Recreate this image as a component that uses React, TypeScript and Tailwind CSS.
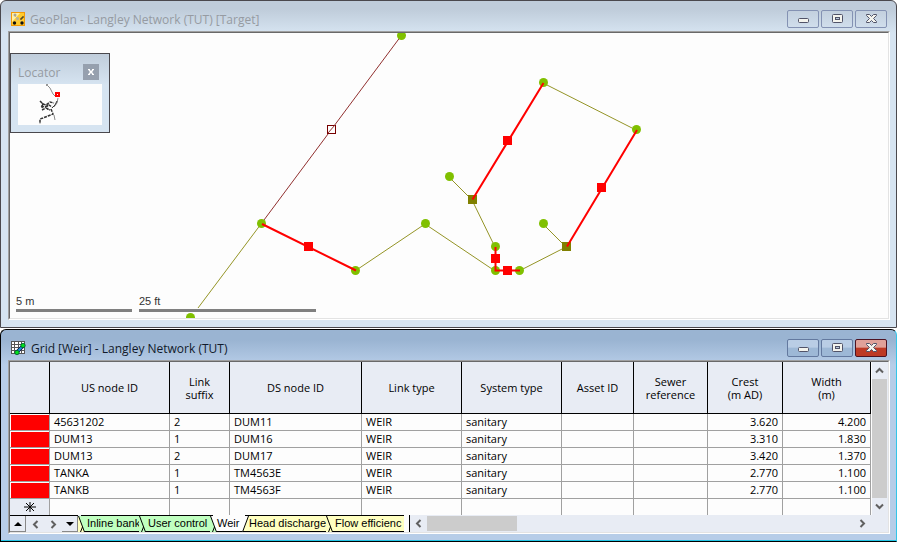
import type { ReactNode } from "react";

const columns = [
  { name: "US node ID", width: "w-[120px]" },
  { name: "Link\nsuffix", width: "w-[60px]" },
  { name: "DS node ID", width: "w-[132px]" },
  { name: "Link type", width: "w-[100px]" },
  { name: "System type", width: "w-[100px]" },
  { name: "Asset ID", width: "w-[72px]" },
  { name: "Sewer\nreference", width: "w-[74px]" },
  { name: "Crest\n(m AD)", width: "w-[75px]" },
  { name: "Width\n(m)", width: "w-[88px]" },
];

const rows = [
  ["45631202", "2", "DUM11", "WEIR", "sanitary", "", "", "3.620", "4.200"],
  ["DUM13", "1", "DUM16", "WEIR", "sanitary", "", "", "3.310", "1.830"],
  ["DUM13", "2", "DUM17", "WEIR", "sanitary", "", "", "3.420", "1.370"],
  ["TANKA", "1", "TM4563E", "WEIR", "sanitary", "", "", "2.770", "1.100"],
  ["TANKB", "1", "TM4563F", "WEIR", "sanitary", "", "", "2.770", "1.100"],
];

const nodes = [
  [391, 3], [251, 191], [345, 238], [415, 191], [439, 144], [485, 214],
  [485, 238], [509, 238], [533, 191], [533, 50], [626, 97], [180, 285],
];
const tanks = [[462, 167], [556, 214]];
const weirs = [[298, 214], [497, 108], [591, 155], [485, 226], [497, 238]];

const GeoPlanIcon = () => (
  <svg width="14" height="14" viewBox="0 0 14 14" aria-hidden="true">
    <rect width="14" height="14" fill="#f39a08" />
    <rect x="1" y="1" width="12" height="12" fill="#ffcb2e" />
    <path d="M1 1h8L1 10z" fill="#fff0a8" />
    <path d="M3 3l4 4M7 7l-3 4M7 7l4 3" stroke="#e2c56a" />
    <circle cx="4" cy="3" r="1.5" fill="#a8a59a" />
    <circle cx="6.500" cy="6.500" r="1.5" fill="#b9b297" />
    <circle cx="3.5" cy="11" r="1.700" fill="#111" />
    <circle cx="11" cy="11" r="1.700" fill="#111" />
    <path d="M9 7h2V5h2" stroke="#222" fill="none" />
  </svg>
);

const GridIcon = () => (
  <svg width="15" height="15" viewBox="0 0 15 15" aria-hidden="true">
    <path d="M0 0h14v13H0z" fill="#555" />
    <path
      d="M1 1h2v2H1zM4 1h3v2H4zM8 1h2v2H8zM11 1h2v2h-2zM1 4h2v2H1zM4 4h3v2H4zM8 4h2v2H8zM1 7h2v2H1zM4 7h3v2H4zM8 7h2v2H8zM11 7h2v2h-2zM1 10h2v2H1zM4 10h3v2H4zM8 10h2v2H8zM11 10h2v2h-2z"
      fill="#fff"
    />
    <path d="M6 11l6-6" stroke="#114" strokeWidth="3.500" />
    <path d="M6 11l6-6" stroke="#1899dd" strokeWidth="2" />
    <circle cx="12" cy="4.500" r="2.200" fill="#00e01c" stroke="#053" strokeWidth=".8" />
    <circle cx="6" cy="11.500" r="2.200" fill="#00e01c" stroke="#053" strokeWidth=".8" />
  </svg>
);

const glyphs = {
  Minimize: (
    <rect x="1.5" y="7.5" width="10" height="4" rx="1" fill="#f4f4ee" stroke="#515368" />
  ),
  Restore: (
    <g stroke="#515368">
      <rect x="1.5" y="3.5" width="10" height="8" rx="1" fill="#f4f4ee" />
      <rect x="4.5" y="6.5" width="4" height="2" fill="#b9c8da" />
    </g>
  ),
  Close: (
    <path
      d="M1.500 3.500h3l2 2 2-2h3v1L8.500 7.500l3 3v1h-3l-2-2-2 2h-3v-1l3-3-3-3z"
      fill="#f4f4ee"
      stroke="#515368"
    />
  ),
};

const WindowButtons = ({ active }: { active: boolean }) => (
  <div className="flex gap-[2px]">
    {(Object.keys(glyphs) as (keyof typeof glyphs)[]).map((label) => {
      let look = "border-[#8492b3] bg-linear-to-b from-[#c3d0de] to-[#d0deec]";
      if (active) {
        look =
          label === "Close"
            ? "border-[#4d1322] bg-linear-to-b from-[#e0a199] from-45% to-[#bd3a25] to-50%"
            : "border-[#63799f] bg-linear-to-b from-[#b9cde5] from-45% to-[#9db8d6] to-50%";
      }
      return (
        <button
          key={label}
          aria-label={label}
          className={`flex h-[18px] w-8 items-center justify-center rounded-[2px] border ${look}`}
        >
          <svg width="13" height="16" viewBox="0 0 13 16" aria-hidden="true">
            {glyphs[label]}
          </svg>
        </button>
      );
    })}
  </div>
);

type WindowProps = {
  title: string;
  icon: ReactNode;
  active?: boolean;
  children: ReactNode;
};

const Window = ({ title, icon, active = false, children }: WindowProps) => (
  <section
    aria-label={title}
    className={`rounded-t-md border pr-[6px] pb-[7px] pl-[7px] ${
      active
        ? "border-black border-r-[#35c5e8] bg-linear-to-b from-[#9ab4d2] from-[10px] to-[#b7cde8] to-[35px] shadow-[inset_0_-1px_#22c5e5]"
        : "border-[#4a484d] bg-linear-to-b from-[#bfccda] from-[8px] to-[#d6e4f1] to-[32px]"
    }`}
  >
    <header className="flex h-[30px] items-start justify-between pt-[9px] pr-[3px] pl-[3px]">
      <div className="flex items-start gap-[5px]">
        <span className="pt-[2px]">{icon}</span>
        <h1
          className={`text-xs leading-5 ${active ? "text-[#111a2b]" : "text-[#969ba2]"}`}
        >
          {title}
        </h1>
      </div>
      <WindowButtons active={active} />
    </header>
    <div className="border border-t-[#a0a0a0] border-r-white border-b-white border-l-[#a0a0a0]">
      <div className="border border-t-[#696969] border-r-[#e3e3e3] border-b-[#e3e3e3] border-l-[#696969] bg-[#fdfdfd]">
        {children}
      </div>
    </div>
  </section>
);

const Network = () => (
  <svg width="100%" height="285" className="block" role="img" aria-label="Network map">
    <path
      d="M188 275L251 191M345 238L415 191 485 238M439 144L462 167 485 214M533 191L556 214 509 238M533 50L626 97"
      fill="none"
      stroke="#949426"
    />
    <path d="M251 191L391 3" stroke="#91302f" />
    {nodes.map(([x, y]) => (
      <circle key={`${x}-${y}`} cx={x + 0.5} cy={y - 0.5} r="4.500" fill="#80c000" />
    ))}
    {tanks.map(([x, y]) => (
      <rect key={x} x={x - 4} y={y - 5} width="9" height="9" fill="#808000" />
    ))}
    <path
      d="M252 191L346 237.500M533.500 50L462.500 166.500M627 97L557 213.500M485.500 214V237.500H510"
      fill="none"
      stroke="#f00"
      strokeWidth="2"
    />
    {weirs.map(([x, y]) => (
      <rect key={`${x}-${y}`} x={x - 4} y={y - 5} width="9" height="9" fill="#f00" />
    ))}
    <rect x="317.5" y="92.5" width="8" height="8" fill="#fdfdfd" stroke="#700" />
    <path d="M318 100l7-8" stroke="#91302f" />
  </svg>
);

const Locator = () => (
  <aside className="absolute top-5 left-0 w-[100px] border border-[#4a484d] bg-linear-to-b from-[#c0cddb] to-[#d6e4f1] to-40% px-[7px] pt-[10px] pb-[7px]">
    <div className="flex h-5 items-start justify-between pr-[3px]">
      <h2 className="text-xs leading-[18px] text-[#969ba2]">Locator</h2>
      <button
        aria-label="Close locator"
        className="flex size-4 items-center justify-center bg-[#96a0ae]"
      >
        <svg width="6" height="6" viewBox="0 0 6 6" aria-hidden="true">
          <path d="M1 1l4 4M5 1L1 5" stroke="#fff" strokeWidth="1.500" />
          <path d="M0 .5h2M4 .5h2M0 5.500h2M4 5.500h2" stroke="#fff" />
        </svg>
      </button>
    </div>
    <svg width="84" height="41" viewBox="0 0 84 41" className="block bg-[#fdfdfd]" aria-hidden="true">
      <path d="M30 2l2 2 3 6 3 3M40 14l-1 5-3 4M36 31l1 5" fill="none" stroke="#8a8a8a" />
      <path d="M28 1h2M39 17l-2 4-3 3" fill="none" stroke="#333" />
      <path
        d="M22 17l3 3 3 1 4-3 4 1M23 22l4 1 4-2 3 2M24 26l4-2 4 2M25 19l-1 5M29 20l1 6M33 25l2 5-5 2-5 2-3 1v5"
        fill="none"
        stroke="#333"
        strokeWidth="1.500"
        strokeDasharray="3 1"
      />
      <rect x="38" y="9" width="3" height="3" fill="#fdfdfd" stroke="#f00" strokeWidth="2" />
    </svg>
  </aside>
);

const Scale = ({ label, width }: { label: string; width: string }) => (
  <div
    className={`border-b-3 border-[#808080] font-['Liberation_Sans',sans-serif] text-[11px] leading-[15px] text-[#333] ${width}`}
  >
    {label}
  </div>
);

const Chevron = ({ d }: { d: string }) => (
  <svg width="9" height="9" viewBox="0 0 9 9" className="shrink-0" aria-hidden="true">
    <path d={d} fill="none" stroke="#606060" strokeWidth="2" />
  </svg>
);

const WeirTable = () => (
  <table className="w-full table-fixed border-separate border-spacing-0 text-[11px] leading-[13px] text-black">
    <thead>
      <tr className="h-[52px]">
        <th className="w-10 border-r border-b border-black bg-[#e8ecf4]" aria-label="Row" />
        {columns.map(({ name, width }) => (
          <th
            key={name}
            className={`border-r border-b border-black bg-[#e8ecf4] p-0 font-normal whitespace-pre-line ${width}`}
          >
            {name}
          </th>
        ))}
      </tr>
    </thead>
    <tbody>
      {rows.map((row) => (
        <tr key={row[0] + row[1]} className="h-[17px]">
          <td className="border-r border-b border-[#a0a0a0] p-0 pt-px pl-px">
            <div className="h-[15px] bg-[#f00]" />
          </td>
          {row.map((cell, i) => (
            <td
              key={i}
              className={`border-r border-b border-[#a0a0a0] px-1 pt-0 pb-[2px] ${i > 6 ? "text-right" : ""}`}
            >
              {cell}
            </td>
          ))}
        </tr>
      ))}
      <tr className="h-4">
        <td className="border-r border-[#a0a0a0] bg-[#e8ecf4] p-0">
          <svg width="12" height="10" viewBox="0 0 12 10" className="mx-auto block" aria-label="New row">
            <path d="M6 0v10M0 5h12M2 1l8 8M10 1L2 9" stroke="#000" />
          </svg>
        </td>
        {columns.map(({ name }) => (
          <td key={name} className="border-r border-[#a0a0a0] p-0" />
        ))}
      </tr>
    </tbody>
  </table>
);

const green = "#c0ffc0";
const yellow = "#ffffc0";
const white = "#fdfdfd";

const tabs = [
  { label: "Inline bank", look: "w-[61px] pl-[6px] bg-[#c0ffc0] border-t-black", left: yellow, right: green },
  { label: "User control", look: "w-[71px] pl-[6px] bg-[#c0ffc0] border-t-black", left: green, right: green },
  { label: "Weir", look: "w-8 pl-1 bg-[#fdfdfd] border-t-[#fdfdfd]", left: green, right: white },
  { label: "Head discharge", look: "w-[84px] pl-1 bg-[#ffffc0] border-t-black", left: white, right: yellow },
  { label: "Flow efficienc", look: "w-[75px] pl-[6px] bg-[#ffffc0] border-t-black", left: yellow, right: yellow },
];

// Slanted divider between two sheet tabs. It leans the other way after the active tab.
const TabEdge = ({ left, right }: { left: string; right: string }) => (
  <svg
    width="7"
    height="16"
    viewBox="0 0 7 16"
    className="absolute top-0 -left-[3px]"
    aria-hidden="true"
  >
    <rect width="7" height="15" fill={right} />
    {left === white ? (
      <>
        <path d="M0 0h6.500L.500 16H0z" fill={left} />
        <path d="M6.500 0L.500 16" stroke="#000" />
      </>
    ) : (
      <>
        <path d="M0 0h.5l6 16H0z" fill={left} />
        <path d="M.500 0l6 16M4.500 11l-2 5" stroke="#000" />
      </>
    )}
  </svg>
);

const TabBar = () => (
  <div className="flex h-[17px] bg-[#e8ecf4]">
    <div className="flex w-[394px] shrink-0">
      <div className="flex w-[68px] shrink-0 border-t border-black">
        <button
          aria-label="First sheet"
          className="flex w-4 items-center justify-center border-r border-b border-[#888]"
        >
          <svg width="8" height="4" viewBox="0 0 8 4" aria-hidden="true">
            <path d="M0 4l4-4 4 4z" />
          </svg>
        </button>
        <button aria-label="Previous sheet" className="flex w-[18px] items-center justify-center">
          <Chevron d="M6.500 1L3 4.500 6.500 8" />
        </button>
        <button aria-label="Next sheet" className="flex w-[18px] items-center justify-center">
          <Chevron d="M2.500 1L6 4.500 2.500 8" />
        </button>
        <button
          aria-label="Last sheet"
          className="flex w-4 items-center justify-center border-r border-b border-[#888]"
        >
          <svg width="8" height="4" viewBox="0 0 8 4" aria-hidden="true">
            <path d="M0 0h8L4 4z" />
          </svg>
        </button>
      </div>
      <nav
        aria-label="Sheets"
        className="flex pl-[3px] font-['Liberation_Sans',sans-serif] text-[11px] leading-[15px]"
      >
        {tabs.map(({ label, look, left, right }) => (
          <button
            key={label}
            className={`relative shrink-0 border-t border-b border-b-black text-left whitespace-nowrap ${look}`}
          >
            <TabEdge left={left} right={right} />
            <span className="relative">{label}</span>
          </button>
        ))}
      </nav>
    </div>
    <div className="w-[6px] shrink-0 border-r border-black bg-[#fdfdfd]" />
    <div className="flex grow items-center gap-1 pr-[21px] pl-1">
      <Chevron d="M6.500 1L3 4.500 6.500 8" />
      <div className="h-[15px] w-[90px] bg-[#ccc]" />
      <div className="grow" />
      <Chevron d="M2.500 1L6 4.500 2.500 8" />
    </div>
  </div>
);

export default function App() {
  return (
    <main className="bg-white font-['Open_Sans',sans-serif]">
      <Window title="GeoPlan - Langley Network (TUT) [Target]" icon={<GeoPlanIcon />}>
        <div className="relative">
          <Network />
          <Locator />
          <div className="absolute bottom-[6px] left-[6px] flex gap-[7px]">
            <Scale label="5 m" width="w-[116px]" />
            <Scale label="25 ft" width="w-[177px]" />
          </div>
        </div>
      </Window>
      <div className="h-px" />
      <Window title="Grid [Weir] - Langley Network (TUT)" icon={<GridIcon />} active>
        <div className="flex">
          <div className="grow">
            <WeirTable />
          </div>
          <div className="flex w-[17px] shrink-0 flex-col items-center justify-between border-x border-l-[#fdfdfd] border-r-[#e8ecf4] bg-[#e8ecf4] py-1">
            <Chevron d="M1 6.500L4.500 3 8 6.500" />
            <div className="h-[119px] w-full bg-[#ccc]" />
            <Chevron d="M1 2.500L4.500 6 8 2.500" />
          </div>
        </div>
        <TabBar />
      </Window>
    </main>
  );
}
